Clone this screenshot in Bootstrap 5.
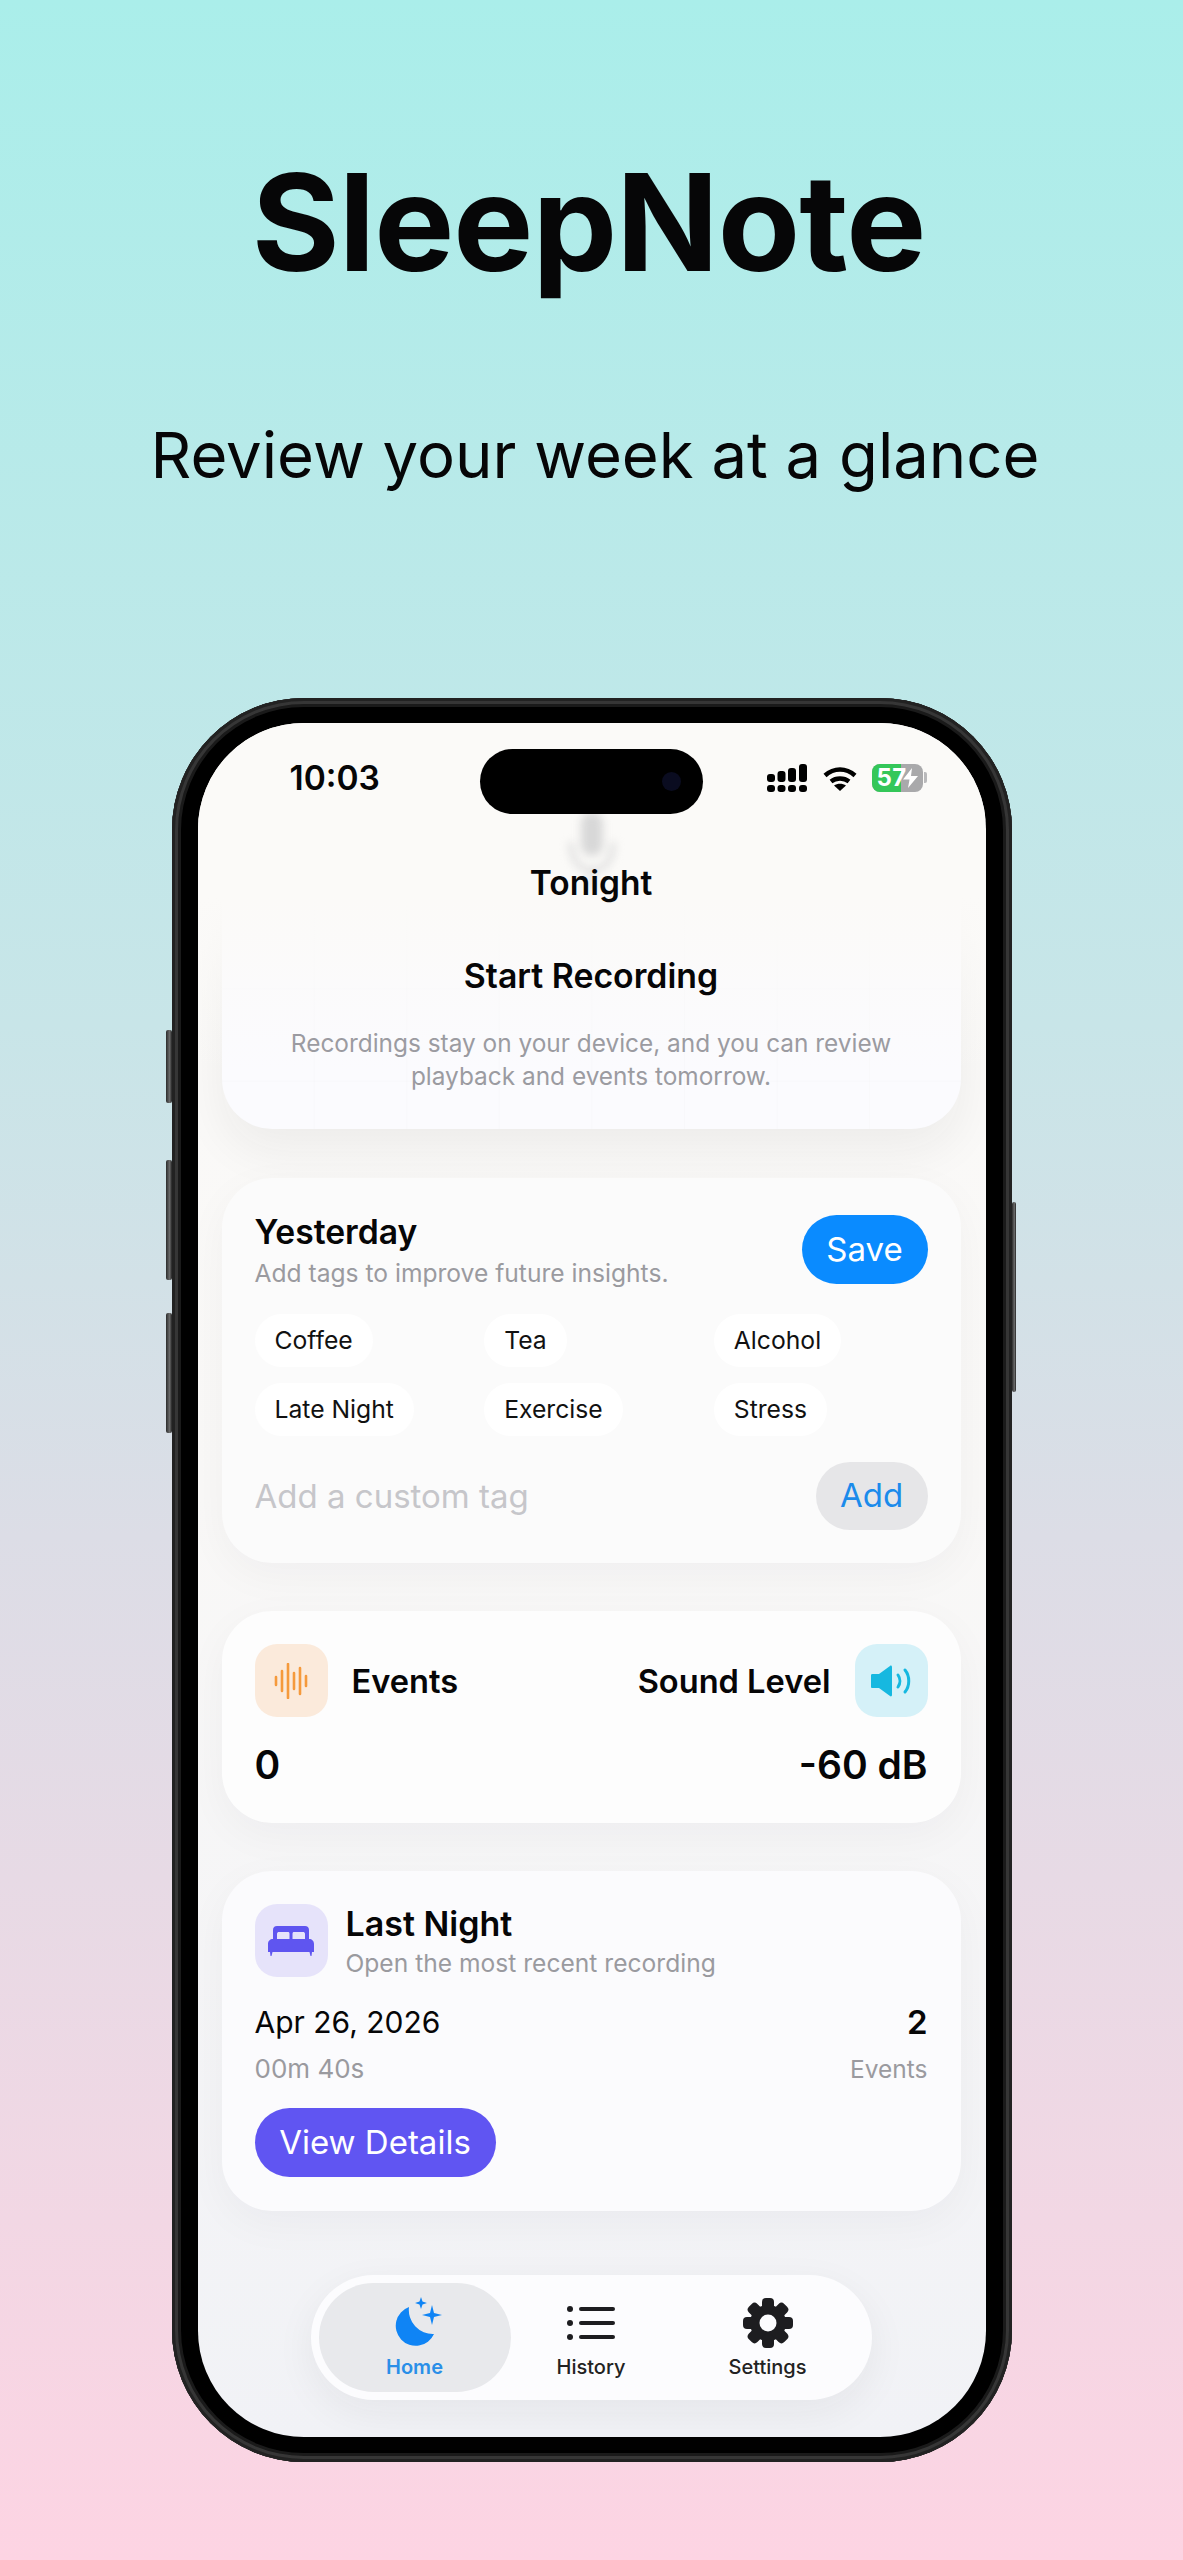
<!DOCTYPE html>
<html lang="en">
<head>
<meta charset="utf-8">
<title>SleepNote</title>
<link href="https://cdn.jsdelivr.net/npm/bootstrap@5.3.0/dist/css/bootstrap.min.css" rel="stylesheet">
<style>
html,body{margin:0;height:2560px;overflow:hidden}
body{background:linear-gradient(180deg,#aaeeea 0%,#c8e5e8 40%,#dcdde6 60%,#fdd4e3 100%);font-family:Inter,"Liberation Sans",sans-serif;color:#060607}
.hero-title{font-size:134.500px;font-weight:700;line-height:160px;padding:142px 6px 0 0;margin:0;letter-spacing:-1px}
.hero-sub{font-size:63.400px;font-weight:400;line-height:80px;margin:113px 0 0;padding-left:7px}
.phone{position:relative;width:840px;height:1764px;margin:203px auto 0;padding:25px 26px;border-radius:132px;background:#000;box-shadow:inset 0 0 0 3px #222,inset 0 0 0 6px #363636,inset 0 0 0 9px #1a1a1a}
.side-btn{position:absolute;background:linear-gradient(90deg,#2b2b2b,#6b6b6b 60%,#222);border-radius:2px}
.sb1{left:-6px;top:332px;width:6px;height:73px}
.sb2{left:-6px;top:462px;width:6px;height:120px}
.sb3{left:-6px;top:615px;width:6px;height:120px}
.sb4{right:-4px;top:504px;width:4px;height:190px}
.screen{position:relative;height:1714px;border-radius:106px;overflow:hidden;background:linear-gradient(180deg,#fbfaf8 0%,#f9f8f7 45%,#f1f2f6 100%);padding:77px 25px 0 24px}
.status-bar{position:absolute;top:0;left:0;right:0;height:90px;z-index:3}
.status-time{position:absolute;left:92px;top:35px;font-size:33.500px;line-height:40px;font-weight:600}
.island{position:absolute;left:282px;top:26px;width:223px;height:65px;border-radius:33px;background:#000}
.island-cam{position:absolute;right:22px;top:23px;width:19px;height:19px;border-radius:50%;background:#0a0c20}
.status-signal{position:absolute;left:569px;top:41px}
.status-wifi{position:absolute;left:625px;top:44px}
.status-batt{position:absolute;left:674px;top:41px;width:51px;height:28px;border-radius:8px;overflow:hidden;background:#a9a9ab}
.batt-fill{position:absolute;left:0;top:0;bottom:0;width:29px;background:#34c759}
.batt-num{position:absolute;left:5px;top:0;color:#fff;font-size:24px;line-height:28px;font-weight:700;letter-spacing:.5px}
.batt-bolt{position:absolute;left:30px;top:4px}
.batt-nub{position:absolute;left:726px;top:49px;width:3px;height:11px;border-radius:0 2px 2px 0;background:#b9b9bb}
.sn-card{border:0;border-radius:50px;background:#fdfdfd;box-shadow:0 12px 44px rgba(30,30,40,.04);margin-bottom:48px;position:relative}
.rec-card{height:329px;padding:63px 40px 0;text-align:center;background-color:#fbfbfe;background-image:linear-gradient(rgba(0,0,0,.012) 1px,transparent 1px),linear-gradient(90deg,rgba(0,0,0,.012) 1px,transparent 1px);background-size:92.6px 92.6px;background-position:-1px 3px;box-shadow:0 22px 48px rgba(30,30,40,.06);margin-bottom:49px}
.rec-veil{position:absolute;left:-24px;right:-24px;top:-77px;height:350px;background:linear-gradient(180deg,#fbfaf8 50%,rgba(251,250,248,.8) 62%,rgba(251,250,248,.4) 78%,rgba(251,250,248,0) 100%)}
.rec-mic{position:absolute;left:340px;top:12px;filter:blur(4px)}
.rec-text{position:relative}
.rec-tonight{font-size:33.500px;line-height:40px;font-weight:600;margin:0}
.rec-start{font-size:33.800px;line-height:40px;font-weight:600;margin:53px 0 0}
.rec-desc{font-size:24.400px;line-height:33px;color:#9b9ba1;margin:31px 0 0}
.tag-card{height:385px;padding:34px 33px 0 33px;background:#fbfbfb}
.card-h{font-size:33.700px;line-height:40px;font-weight:600;margin:0}
.card-sub{font-size:24.600px;line-height:30px;color:#9a9a9f;margin:6px 0 0}
.pill-save{width:126px;height:69px;background:#0a8bff;color:#fff;font-size:33px;padding:0;border:0;margin-top:3px}
.chips{margin-top:10px}
.chip{display:inline-block;height:53px;line-height:53px;padding:0 20px;border-radius:27px;background:#fff;font-size:24.700px;color:#111}
.tag-input{border:0;background:transparent;padding:0;font-size:33px;line-height:40px;color:#111;box-shadow:none}
.tag-input::placeholder{color:#c6c6ca;opacity:1}
.pill-add{width:112px;height:68px;background:#e6e6e8;color:#1b8beb;font-size:33px;padding:0;border:0;flex:none}
.tag-row{margin-top:26px}
.stat-card{height:212px;padding:33px 33px 0}
.ic-box{width:73px;height:73px;border-radius:22px;flex:none}
.ic-orange{background:#fbeadb}
.ic-cyan{background:#d5f1f8}
.ic-purple{background:#e6e3fa}
.stat-label{font-size:32.600px;line-height:40px;font-weight:600}
.stat-val{font-size:39px;line-height:48px;font-weight:600;margin-top:24px}
.night-card{height:340px;padding:33px 33px 0;background:#fbfbfd}
.night-h{font-size:34px;line-height:40px;font-weight:600;margin:0}
.night-sub{font-size:24.600px;line-height:30px;color:#9a9a9f;margin:4px 0 0}
.night-date{font-size:30px;line-height:40px}
.night-count{font-size:33px;line-height:40px;font-weight:600}
.night-muted{font-size:24.500px;line-height:30px;color:#9a9a9f;margin-top:12px}
.night-dur{font-size:26px}
.night-gap{gap:18px}
.pill-view{width:241px;height:69px;background:#6055f2;color:#fff;font-size:33px;padding:0;border:0;margin-top:24px}
.tabbar{width:561px;height:125px;margin:64px auto 0;padding:8px;border-radius:63px;background:#fcfcfe;box-shadow:0 12px 40px rgba(30,30,40,.06)}
.tab{display:flex;flex-direction:column;align-items:center;padding-top:14px;border-radius:55px;width:192px;height:109px;color:#222;font-size:20px;line-height:24px;font-weight:500;text-decoration:none}
.tab svg{display:block;margin-bottom:6px}
.tab-mid{flex:1 1 0;width:auto}
.tab-on{background:#e8e9ec;color:#2a8fe8;font-weight:600}
</style>
</head>
<body>
<header class="text-center">
  <h1 class="hero-title">SleepNote</h1>
  <p class="hero-sub">Review your week at a glance</p>
</header>
<div class="phone">
  <span class="side-btn sb1"></span><span class="side-btn sb2"></span><span class="side-btn sb3"></span><span class="side-btn sb4"></span>
  <div class="screen">
    <div class="status-bar">
      <span class="status-time">10:03</span>
      <div class="island"><span class="island-cam"></span></div>
      <svg class="status-signal" width="40" height="28" viewBox="0 0 40 28" fill="#000">
        <rect x="0" y="21" width="8" height="7" rx="3"/><rect x="10.500" y="21" width="8" height="7" rx="3"/><rect x="21" y="21" width="8" height="7" rx="3"/><rect x="32" y="21" width="8" height="7" rx="3"/>
        <rect x="0" y="10" width="8" height="8" rx="3"/><rect x="10.500" y="7" width="8" height="11" rx="3"/><rect x="21" y="4" width="8" height="14" rx="3"/><rect x="32" y="0" width="8" height="18" rx="3"/>
      </svg>
      <svg class="status-wifi" width="34" height="24" viewBox="0 0 34 24" fill="none" stroke="#000" stroke-width="4.500">
        <path d="M2 8.500C11 0.500 23 0.500 32 8.500"/><path d="M8 14.500C13 10.500 21 10.500 26 14.500"/><path d="M17 24L11 18.500C14.500 16 19.500 16 23 18.500Z" fill="#000" stroke="none"/>
      </svg>
      <div class="status-batt"><span class="batt-fill"></span><span class="batt-num">57</span>
        <svg class="batt-bolt" width="17" height="20" viewBox="0 0 17 20" fill="#fff"><path d="M10 0L1 11.500H7.500L6 20L16 8H9Z"/></svg>
      </div>
      <span class="batt-nub"></span>
    </div>

    <section class="card sn-card rec-card">
      <div class="rec-veil"></div>
      <svg class="rec-mic" width="60" height="96" viewBox="0 0 60 96" fill="none" stroke="#dcdcdc" stroke-width="5">
        <rect x="19" y="0" width="22" height="44" rx="11" fill="#d8d8d8" stroke="none"/>
        <path d="M9 30C9 48 17 58 30 58C43 58 51 48 51 30"/><path d="M30 58V78"/>
      </svg>
      <div class="rec-text">
        <h2 class="rec-tonight">Tonight</h2>
        <h3 class="rec-start">Start Recording</h3>
        <p class="rec-desc">Recordings stay on your device, and you can review<br>playback and events tomorrow.</p>
      </div>
    </section>

    <section class="card sn-card tag-card">
      <div class="d-flex justify-content-between align-items-start">
        <div>
          <h3 class="card-h">Yesterday</h3>
          <p class="card-sub">Add tags to improve future insights.</p>
        </div>
        <button type="button" class="btn rounded-pill pill-save">Save</button>
      </div>
      <div class="row row-cols-3 g-3 chips">
        <div class="col"><span class="chip">Coffee</span></div>
        <div class="col"><span class="chip">Tea</span></div>
        <div class="col"><span class="chip">Alcohol</span></div>
        <div class="col"><span class="chip">Late Night</span></div>
        <div class="col"><span class="chip">Exercise</span></div>
        <div class="col"><span class="chip">Stress</span></div>
      </div>
      <div class="d-flex align-items-center gap-3 tag-row">
        <input class="form-control tag-input" type="text" placeholder="Add a custom tag" aria-label="Add a custom tag">
        <button type="button" class="btn rounded-pill pill-add">Add</button>
      </div>
    </section>

    <section class="card sn-card stat-card">
      <div class="d-flex justify-content-between align-items-center">
        <div class="d-flex align-items-center gap-4">
          <span class="ic-box ic-orange d-flex align-items-center justify-content-center">
            <svg width="34" height="36" viewBox="0 0 34 36" fill="none" stroke="#f59a3c" stroke-width="2.600" stroke-linecap="round"><path d="M2 14V22M8 8V28M14 1V35M20 10V26M26 5V31M32 13V23"/></svg>
          </span>
          <span class="stat-label">Events</span>
        </div>
        <div class="d-flex align-items-center gap-4">
          <span class="stat-label">Sound Level</span>
          <span class="ic-box ic-cyan d-flex align-items-center justify-content-center">
            <svg width="42" height="32" viewBox="0 0 42 32" fill="none" stroke="#16b8e0" stroke-width="3" stroke-linecap="round"><path d="M1 10C1 9 2 9 3 9H9L20 1C21 0 22 1 22 2V30C22 31 21 32 20 31L9 23H3C2 23 1 23 1 22Z" fill="#16b8e0" stroke="none"/><path d="M28 10C30.500 13.500 30.500 18.500 28 22"/><path d="M35 5C40 11 40 21 35 27"/></svg>
          </span>
        </div>
      </div>
      <div class="d-flex justify-content-between stat-val"><span>0</span><span>-60 dB</span></div>
    </section>

    <section class="card sn-card night-card">
      <div class="d-flex night-gap">
        <span class="ic-box ic-purple d-flex align-items-center justify-content-center">
          <svg width="46" height="30" viewBox="0 0 46 30" fill="#5f55f0"><path d="M9 0H37C39.500 0 41 1.500 41 4V13H37V8C37 6.500 36 6 35 6H26C25 6 24.500 6.500 24.500 8V13H21.500V8C21.500 6.500 21 6 20 6H11C10 6 9 6.500 9 8V13H5V4C5 1.500 6.500 0 9 0Z"/><path d="M5 13H41C44 13 46 15 46 18V26H44L43.500 30H42.500L41.500 26H4.500L3.500 30H2.500L2 26H0V18C0 15 2 13 5 13Z"/></svg>
        </span>
        <div>
          <h3 class="night-h">Last Night</h3>
          <p class="night-sub">Open the most recent recording</p>
        </div>
      </div>
      <div class="d-flex justify-content-between mt-4 pt-0">
        <div><div class="night-date">Apr 26, 2026</div><div class="night-muted night-dur">00m 40s</div></div>
        <div class="text-end"><div class="night-count">2</div><div class="night-muted">Events</div></div>
      </div>
      <div><button type="button" class="btn rounded-pill pill-view">View Details</button></div>
    </section>

    <nav class="d-flex tabbar">
      <a class="tab tab-on" href="#">
        <svg width="56" height="52" viewBox="0 0 56 52" fill="#0f84f5"><path d="M22 10A20 20 0 1 0 47 37A24 24 0 0 1 22 10Z"/><path d="M45 8L47 16L55 18L47 20L45 28L43 20L35 18L43 16Z"/><path d="M34 0L35.500 4.500L40 6L35.500 7.500L34 12L32.500 7.500L28 6L32.500 4.500Z"/></svg>
        Home
      </a>
      <a class="tab tab-mid" href="#">
        <svg width="48" height="52" viewBox="0 0 48 52" fill="#1d1d20"><circle cx="3" cy="12" r="3"/><circle cx="3" cy="26" r="3"/><circle cx="3" cy="40" r="3"/><rect x="12" y="10" width="36" height="4" rx="2"/><rect x="12" y="24" width="36" height="4" rx="2"/><rect x="12" y="38" width="36" height="4" rx="2"/></svg>
        History
      </a>
      <a class="tab" href="#">
        <svg width="52" height="52" viewBox="0 0 52 52"><g fill="#1d1d20"><circle cx="26" cy="26" r="18"/><rect x="20" y="1" width="12" height="50" rx="4"/><rect x="20" y="1" width="12" height="50" rx="4" transform="rotate(45 26 26)"/><rect x="20" y="1" width="12" height="50" rx="4" transform="rotate(90 26 26)"/><rect x="20" y="1" width="12" height="50" rx="4" transform="rotate(135 26 26)"/></g><circle cx="26" cy="26" r="8.500" fill="#fcfcfe"/></svg>
        Settings
      </a>
    </nav>
  </div>
</div>
<script src="https://cdn.jsdelivr.net/npm/bootstrap@5.3.0/dist/js/bootstrap.bundle.min.js"></script>
</body>
</html>
